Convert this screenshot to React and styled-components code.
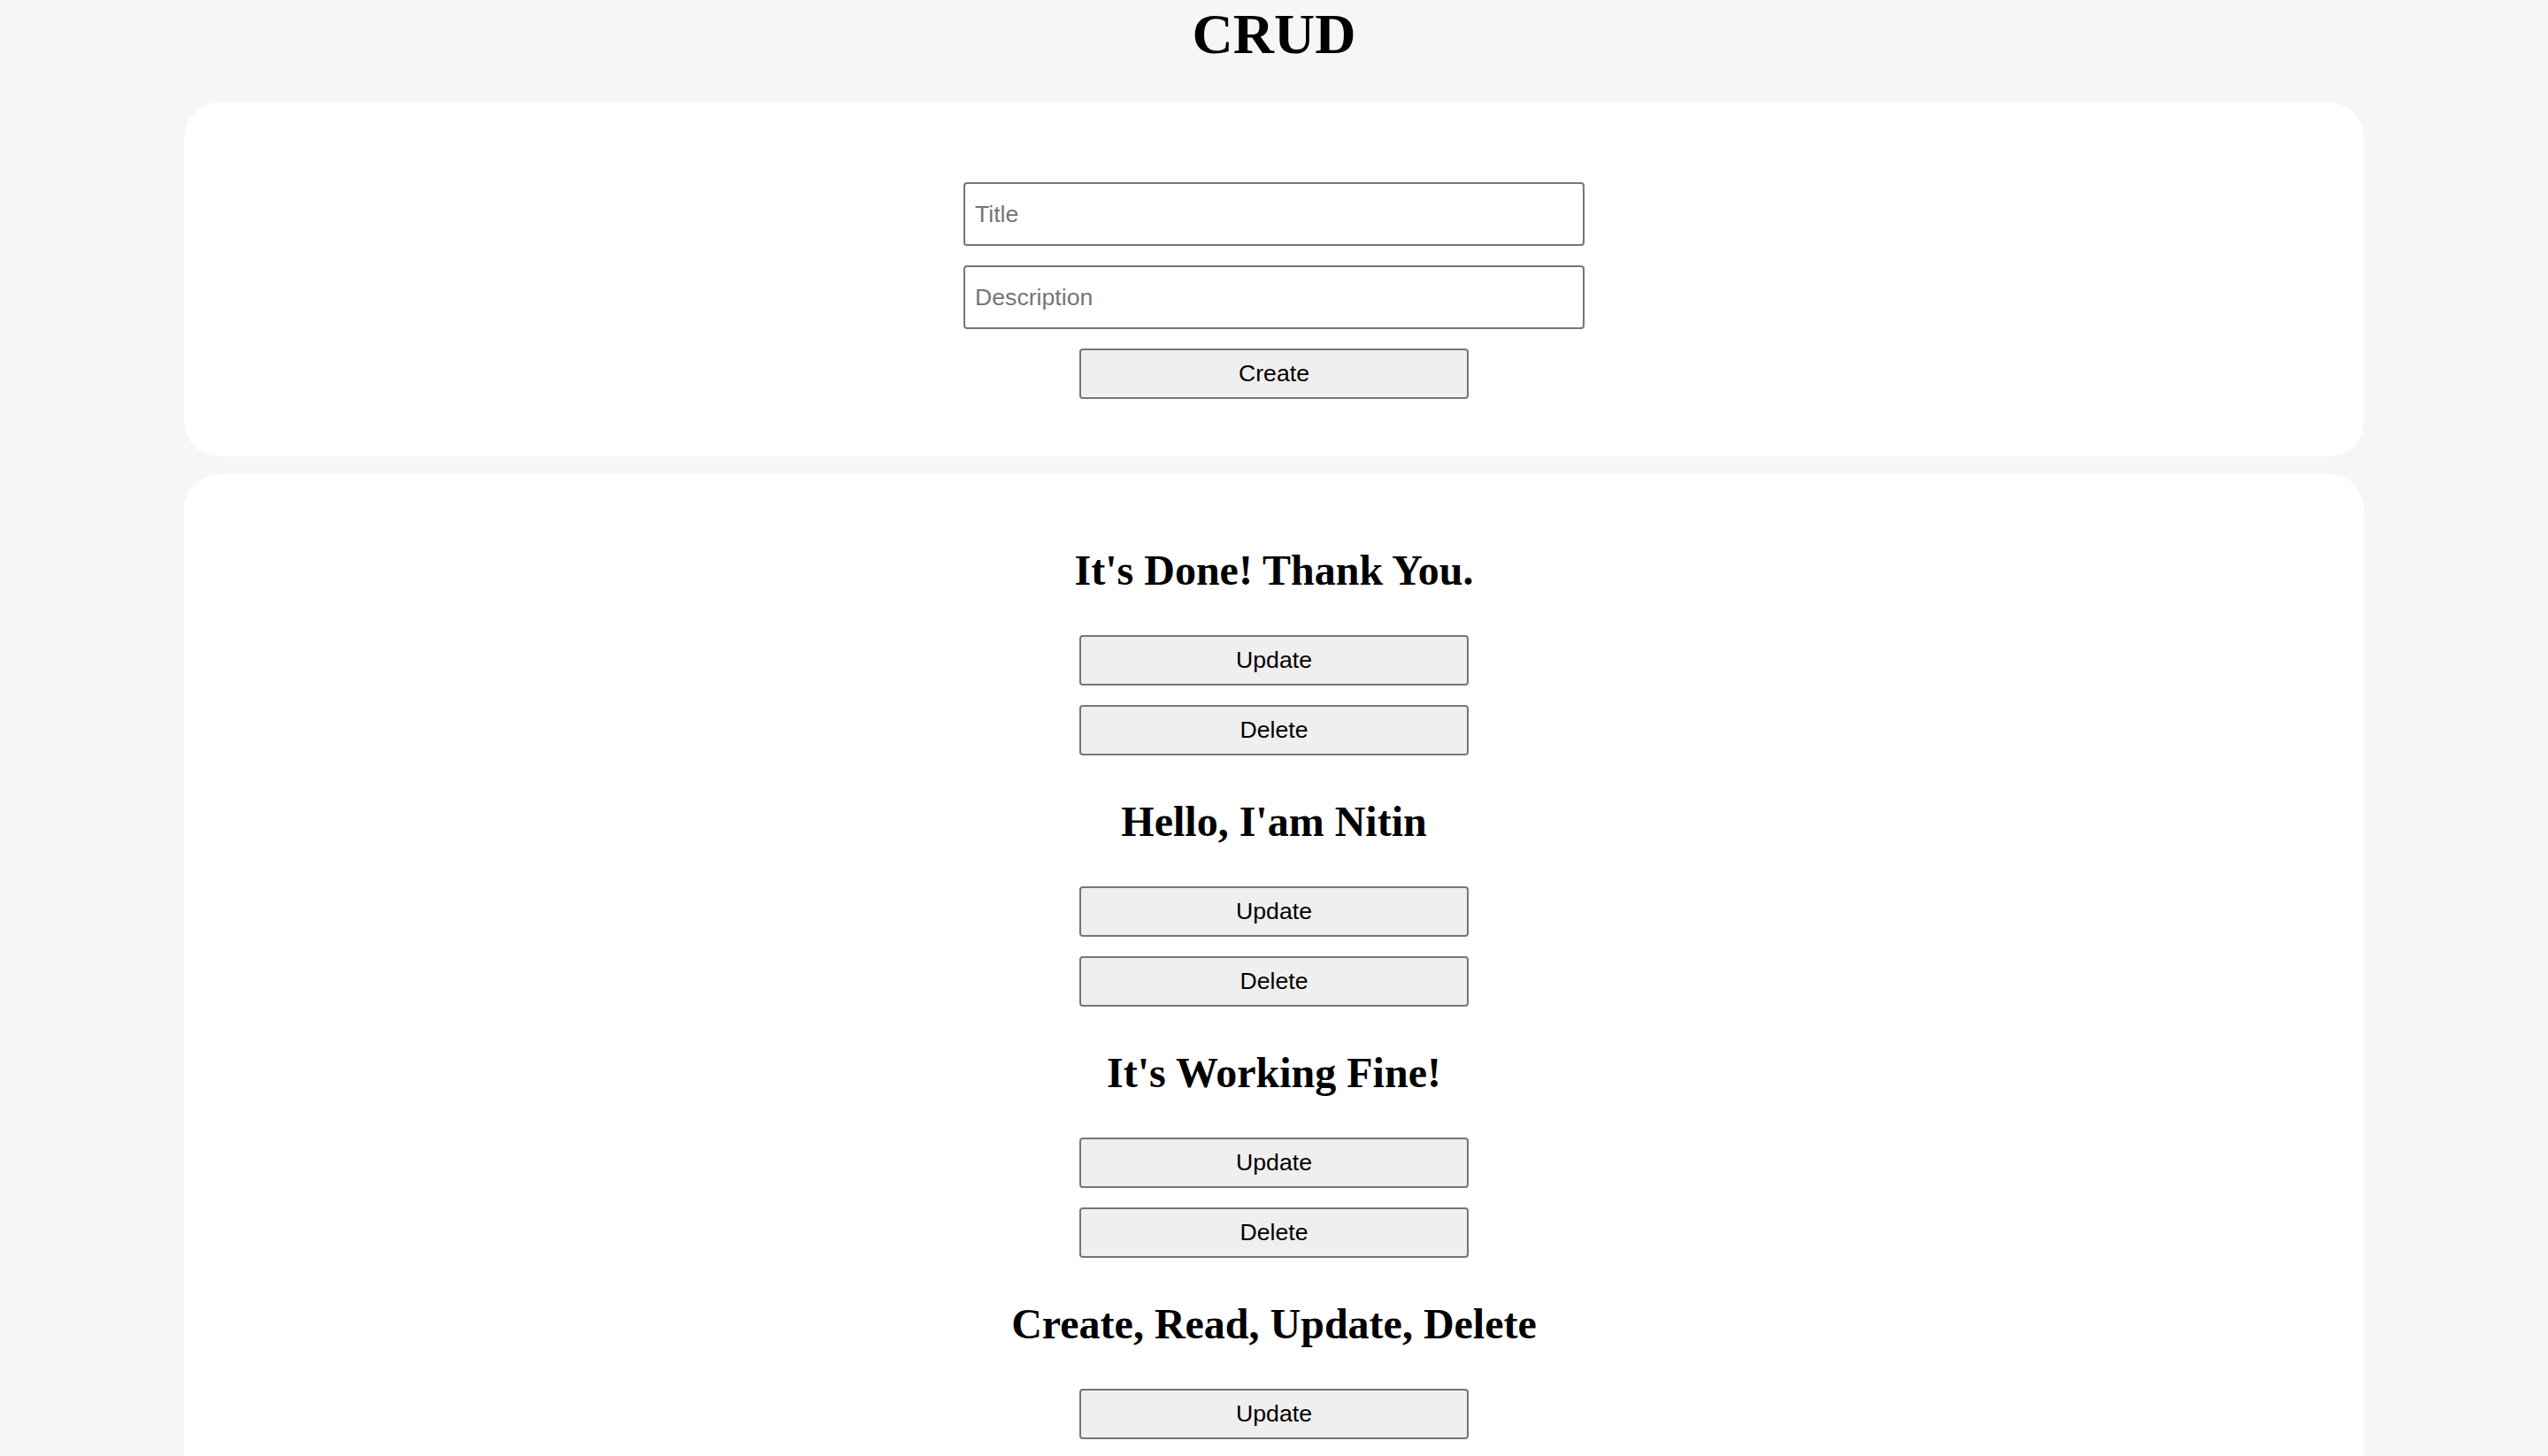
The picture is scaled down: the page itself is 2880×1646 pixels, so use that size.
import React from "react";
import styled, { createGlobalStyle } from "styled-components";

const GlobalStyle = createGlobalStyle`
  html, body {
    margin: 0;
    padding: 0;
    background: #f6f6f6;
  }
  body {
    font-family: "Liberation Serif", "Times New Roman", serif;
    color: #000;
  }
  * { box-sizing: border-box; }
`;

const Page = styled.div`
  display: flex;
  flex-direction: column;
`;

const Title = styled.h1`
  margin: 2px 0 40px;
  font-family: "Liberation Serif", "Times New Roman", serif;
  font-weight: 700;
  font-size: 64px;
  line-height: 74px;
  text-align: center;
`;

const Card = styled.section`
  margin: ${(p) => (p.$first ? "0" : "20px")} 208px 0;
  background: #ffffff;
  border-radius: 40px;
  padding: ${(p) => p.$pad};
  display: flex;
  flex-direction: column;
  align-items: center;
`;

const Form = styled.form`
  display: flex;
  flex-direction: column;
  align-items: center;
  gap: 22px;
`;

const Input = styled.input`
  width: 702px;
  height: 72px;
  padding: 0 11px;
  border: 2px solid #767676;
  border-radius: 4px;
  background: #fff;
  font-family: "Liberation Sans", Arial, sans-serif;
  font-size: 26.67px;
  color: #000;
  outline: none;
  &::placeholder {
    color: #757575;
  }
`;

const Button = styled.button`
  width: 440px;
  height: 57px;
  padding: 0;
  border: 2px solid #767676;
  border-radius: 4px;
  background: #efefef;
  font-family: "Liberation Sans", Arial, sans-serif;
  font-size: 26.67px;
  color: #000;
  cursor: pointer;
`;

const List = styled.div`
  display: flex;
  flex-direction: column;
  align-items: center;
  gap: 47px;
  width: 100%;
`;

const Item = styled.div`
  display: flex;
  flex-direction: column;
  align-items: center;
  gap: 22px;
  width: 100%;
`;

const ItemTitle = styled.h2`
  margin: 0 0 24px;
  font-family: "Liberation Serif", "Times New Roman", serif;
  font-weight: 700;
  font-size: 48px;
  line-height: 55px;
  text-align: center;
`;

const todos = [
  "It's Done! Thank You.",
  "Hello, I'am Nitin",
  "It's Working Fine!",
  "Create, Read, Update, Delete",
];

export default function App() {
  return (
    <>
      <GlobalStyle />
      <Page>
        <Title>CRUD</Title>
        <Card $first $pad="90px 0 65px">
          <Form onSubmit={(e) => e.preventDefault()}>
            <Input type="text" placeholder="Title" />
            <Input type="text" placeholder="Description" />
            <Button type="submit">Create</Button>
          </Form>
        </Card>
        <Card $pad="81px 0 80px">
          <List>
            {todos.map((t) => (
              <Item key={t}>
                <ItemTitle>{t}</ItemTitle>
                <Button type="button">Update</Button>
                <Button type="button">Delete</Button>
              </Item>
            ))}
          </List>
        </Card>
      </Page>
    </>
  );
}
